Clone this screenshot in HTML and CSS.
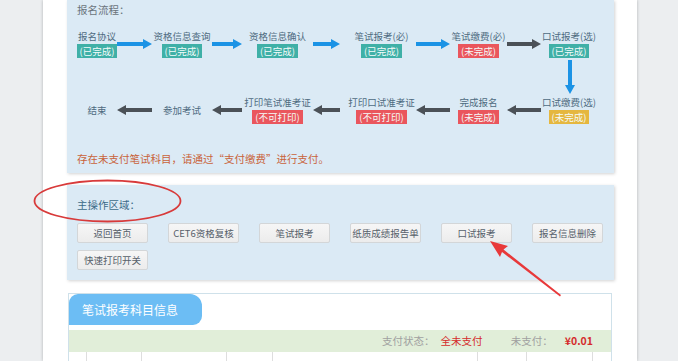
FILE: index.html
```html
<!DOCTYPE html>
<html lang="zh-CN">
<head>
  <meta charset="UTF-8" />
  <title>报名流程</title>
  <link rel="stylesheet" href="styles.css">
</head>
<body>
  <div class="page">
    <div class="panel flow">
      <div class="panel-title">报名流程：</div>
      <div class="steps">
        <div class="step"><span class="name">报名协议</span><span class="tag done">(已完成)</span></div>
        <svg class="arrow" width="35" height="10" viewBox="0 0 35 10"><polygon class="blue" points="0,3 26,3 26,0 35,5 26,10 26,7 0,7"/></svg>
        <div class="step"><span class="name">资格信息查询</span><span class="tag done">(已完成)</span></div>
        <svg class="arrow" width="30" height="10" viewBox="0 0 30 10"><polygon class="blue" points="0,3 21,3 21,0 30,5 21,10 21,7 0,7"/></svg>
        <div class="step"><span class="name">资格信息确认</span><span class="tag done">(已完成)</span></div>
        <svg class="arrow" width="27" height="10" viewBox="0 0 27 10"><polygon class="blue" points="0,3 18,3 18,0 27,5 18,10 18,7 0,7"/></svg>
        <div class="step shift"><span class="name">笔试报考(必)</span><span class="tag done">(已完成)</span></div>
        <svg class="arrow" width="34" height="10" viewBox="0 0 34 10"><polygon class="blue" points="0,3 25,3 25,0 34,5 25,10 25,7 0,7"/></svg>
        <div class="step"><span class="name">笔试缴费(必)</span><span class="tag todo">(未完成)</span></div>
        <svg class="arrow" width="34" height="10" viewBox="0 0 34 10"><polygon class="dark" points="0,3 25,3 25,0 34,5 25,10 25,7 0,7"/></svg>
        <div class="step"><span class="name">口试报考(选)</span><span class="tag done">(已完成)</span></div>

        <svg class="down" width="10" height="34" viewBox="0 0 10 34"><polygon class="blue" points="3,0 7,0 7,25 10,25 5,34 0,25 3,25"/></svg>

        <div class="step"><span class="name">结束</span></div>
        <svg class="arrow" width="35" height="10" viewBox="0 0 35 10"><polygon class="dark" points="35,3 9,3 9,0 0,5 9,10 9,7 35,7"/></svg>
        <div class="step"><span class="name">参加考试</span></div>
        <svg class="arrow" width="30" height="10" viewBox="0 0 30 10"><polygon class="dark" points="30,3 9,3 9,0 0,5 9,10 9,7 30,7"/></svg>
        <div class="step"><span class="name">打印笔试准考证</span><span class="tag todo">(不可打印)</span></div>
        <svg class="arrow" width="27" height="10" viewBox="0 0 27 10"><polygon class="dark" points="27,3 9,3 9,0 0,5 9,10 9,7 27,7"/></svg>
        <div class="step shift"><span class="name">打印口试准考证</span><span class="tag todo">(不可打印)</span></div>
        <svg class="arrow" width="34" height="10" viewBox="0 0 34 10"><polygon class="dark" points="34,3 9,3 9,0 0,5 9,10 9,7 34,7"/></svg>
        <div class="step"><span class="name">完成报名</span><span class="tag todo">(未完成)</span></div>
        <svg class="arrow" width="34" height="10" viewBox="0 0 34 10"><polygon class="dark" points="34,3 9,3 9,0 0,5 9,10 9,7 34,7"/></svg>
        <div class="step"><span class="name">口试缴费(选)</span><span class="tag wait">(未完成)</span></div>
      </div>
      <div class="warn">存在未支付笔试科目，请通过“支付缴费”进行支付。</div>
    </div>

    <div class="panel ops">
      <div class="ops-title">主操作区域：</div>
      <div class="btns">
        <button>返回首页</button>
        <button>CET6资格复核</button>
        <button>笔试报考</button>
        <button>纸质成绩报告单</button>
        <button>口试报考</button>
        <button>报名信息删除</button>
        <button>快速打印开关</button>
      </div>
    </div>

    <div class="subject-box">
      <div class="tab">笔试报考科目信息</div>
      <div class="paybar">
        <span class="lbl">支付状态：</span><span class="red">全未支付</span>
        <span class="lbl gap">未支付：</span><span class="red money">¥0.01</span>
      </div>
      <div class="table-row">
        <span></span><span></span><span></span><span></span><span></span><span></span><span></span><span></span>
      </div>
    </div>
  </div>

  <!-- 标注 -->
  <svg class="marks" width="678" height="361" viewBox="0 0 678 361">
    <ellipse cx="107.5" cy="201" rx="73" ry="20.5" fill="none" stroke="#d83a3a" stroke-width="1.8"/>
    <polygon fill="#e8393a" points="490,241 508,246 503.5,249.5 561,295 560,296.5 502,252 500,257"/>
  </svg>
</body>
</html>
```

FILE: styles.css
```css
* {
  box-sizing: border-box;
}

html, body {
  height: 361px;
  overflow: hidden;
}

body {
  margin: 0;
  position: relative;
  background: #eceef0;
  font-family: "Noto Sans CJK SC", "Noto Sans", sans-serif;
  color: #4e6a7f;
}

.page {
  margin-left: 43px;
  width: 594px;
  height: 361px;
  padding: 0 23px 0 24px;
  background: #fff;
  box-shadow: 0 0 3px rgba(0, 0, 0, 0.25);
}

.panel {
  background: #dbeaf5;
  padding: 0 10px;
  box-shadow: 1px 1px 3px rgba(0, 0, 0, 0.18);
}

.flow {
  padding-top: 3px;
  padding-bottom: 7px;
}

.panel-title {
  font-size: 10.5px;
  line-height: 14px;
  color: #6a747c;
  margin-bottom: 14px;
}

.steps {
  display: grid;
  grid-template-columns: 40px 35px 60px 30px 71px 27px 76px 34px 57px 34px 56px;
  grid-template-rows: 26px 40px 26px;
}

.step {
  display: flex;
  flex-direction: column;
  align-items: center;
  justify-content: center;
  white-space: nowrap;
}

.step.shift {
  padding-left: 7px;
}

.name {
  font-size: 9.5px;
  line-height: 11px;
}

.tag {
  margin-top: 2px;
  height: 14px;
  line-height: 14px;
  padding: 0 3px;
  font-size: 9.5px;
  color: #f4fbfa;
}

.done { background: #3fb0a7; }
.todo { background: #ea565d; }
.wait { background: #e5b73f; }

.arrow {
  align-self: center;
  display: block;
}

.down {
  grid-column: 11;
  justify-self: center;
  align-self: center;
  margin-left: 1px;
  display: block;
}

.blue { fill: #1b93e5; }
.dark { fill: #4b5157; }

.warn {
  margin-top: 29px;
  font-size: 10.5px;
  line-height: 14px;
  color: #c9633a;
}

.ops {
  margin-top: 12px;
  padding-top: 13px;
  padding-bottom: 10px;
}

.ops-title {
  font-size: 10.5px;
  line-height: 14px;
  color: #3b6a88;
  margin-bottom: 11px;
}

.btns {
  display: flex;
  flex-wrap: wrap;
  column-gap: 20px;
  row-gap: 7px;
}

.btns button {
  width: 71px;
  height: 20px;
  padding: 0;
  font-family: inherit;
  font-size: 9.5px;
  color: #56606a;
  background: linear-gradient(#f6f6f6, #ececec);
  border: 1px solid #d3d6d8;
  border-radius: 2px;
}

.subject-box {
  margin: 13px 2px 0 1px;
  border: 1px solid #cfe1ea;
}

.tab {
  width: 133px;
  height: 31px;
  line-height: 31px;
  padding-left: 13px;
  font-size: 12px;
  color: #fff;
  background: #6cbdf4;
  border-radius: 9px 12px 9px 0;
}

.paybar {
  margin-top: 5px;
  height: 22px;
  line-height: 22px;
  padding-right: 18px;
  text-align: right;
  font-size: 10.5px;
  background: #e1eed9;
}

.lbl {
  color: #a0a0a0;
  margin-right: 6px;
}

.lbl.gap {
  margin-left: 26px;
  margin-right: 12px;
}

.red {
  color: #d52b2b;
}

.money {
  font-weight: bold;
}

.table-row {
  display: grid;
  grid-template-columns: 18px 55px 85px 46px 205px 49px 66px 18px;
  height: 30px;
}

.table-row span {
  border-right: 1px solid #dedede;
}

.table-row span:last-child {
  border-right: none;
}

.marks {
  position: absolute;
  left: 0;
  top: 0;
  pointer-events: none;
}
```
